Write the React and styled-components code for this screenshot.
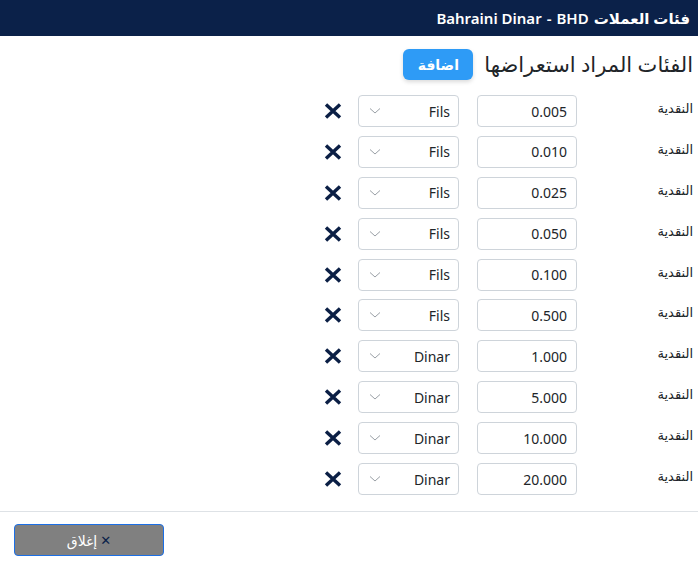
import React, { useState } from "react";
import styled, { createGlobalStyle } from "styled-components";

const GlobalStyle = createGlobalStyle`
  html, body {
    margin: 0;
    padding: 0;
    background: #fff;
    font-family: "Noto Sans", "DejaVu Sans", sans-serif;
    color: #212529;
  }
`;

let Page = styled.div`
  direction: rtl;
  width: 698px;
  height: 563px;
  display: flex;
  flex-direction: column;
`;

let Header = styled.div`
  height: 36px;
  background: #0b2149;
  color: #fff;
  display: flex;
  align-items: center;
  gap: 5px;
  padding: 0 8px;
  font-size: 15px;
  font-weight: 600;
`;

let Body = styled.div`
  padding: 13px 5px 0 0;
  flex: 1;
`;

let TitleRow = styled.div`
  display: flex;
  align-items: center;
  gap: 11px;
  height: 31px;
`;

let Title = styled.div`
  font-size: 21px;
  line-height: 31px;
`;

let AddButton = styled.button`
  width: 70px;
  height: 31px;
  border: none;
  border-radius: 6px;
  background: #2e9bf6;
  color: #fff;
  font-family: inherit;
  font-size: 14px;
  font-weight: 700;
  box-shadow: 0 2px 4px rgba(0, 0, 0, 0.15);
  cursor: pointer;
`;

let List = styled.div`
  margin-top: 15px;
  display: flex;
  flex-direction: column;
  gap: 8.9px;
`;

let Row = styled.div`
  display: flex;
  align-items: center;
  height: 32px;
`;

let Label = styled.div`
  width: 116px;
  font-size: 13px;
  margin-top: -6px;
`;

let ValueInput = styled.input`
  box-sizing: border-box;
  width: 100px;
  height: 32px;
  border: 1px solid #ced4da;
  border-radius: 4px;
  padding: 0 9px;
  font-family: inherit;
  font-size: 14px;
  color: #212529;
  text-align: right;
  direction: ltr;
  outline: none;
`;

let SelectBox = styled.div`
  box-sizing: border-box;
  width: 101px;
  height: 32px;
  margin-right: 18px;
  border: 1px solid #ced4da;
  border-radius: 4px;
  padding: 0 8px 0 10px;
  display: flex;
  align-items: center;
  justify-content: space-between;
  font-size: 14px;
  color: #212529;
`;

let RemoveButton = styled.button`
  margin-right: 16px;
  width: 18px;
  height: 18px;
  padding: 0;
  border: none;
  background: none;
  display: flex;
  align-items: center;
  justify-content: center;
  cursor: pointer;
`;

let Footer = styled.div`
  border-top: 1px solid #dee2e6;
  padding: 12px 14px 7px;
  display: flex;
  justify-content: flex-end;
`;

let CloseButton = styled.button`
  width: 150px;
  height: 32px;
  background: #808080;
  border: 1px solid #1b6fe6;
  border-radius: 4px;
  color: #fff;
  font-family: inherit;
  font-size: 14px;
  display: flex;
  align-items: center;
  justify-content: center;
  gap: 3px;
  cursor: pointer;
`;

let CloseMark = styled.span`
  color: #0b2149;
  font-size: 13px;
`;

const Chevron = () => (
  <svg width="12" height="8" viewBox="0 0 12 8">
    <path d="M1 1.5 L6 6 L11 1.5" fill="none" stroke="#9aa0a6" strokeWidth="1" />
  </svg>
);

const Cross = () => (
  <svg width="18" height="16" viewBox="0 0 18 16">
    <path
      d="M2 1.5 L16 14.5 M16 1.5 L2 14.5"
      stroke="#0b1f45"
      strokeWidth="3.4"
      strokeLinecap="butt"
    />
  </svg>
);

const initial = [
  { value: "0.005", unit: "Fils" },
  { value: "0.010", unit: "Fils" },
  { value: "0.025", unit: "Fils" },
  { value: "0.050", unit: "Fils" },
  { value: "0.100", unit: "Fils" },
  { value: "0.500", unit: "Fils" },
  { value: "1.000", unit: "Dinar" },
  { value: "5.000", unit: "Dinar" },
  { value: "10.000", unit: "Dinar" },
  { value: "20.000", unit: "Dinar" },
];

function App() {
  const [rows] = useState(initial);

  return (
    <>
      <GlobalStyle />
      <Page>
        <Header>
          <span>فئات العملات</span>
          <span>BHD</span>
          <span>-</span>
          <span>Bahraini Dinar</span>
        </Header>
        <Body>
          <TitleRow>
            <Title>الفئات المراد استعراضها</Title>
            <AddButton>اضافة</AddButton>
          </TitleRow>
          <List>
            {rows.map((row, i) => (
              <Row key={i}>
                <Label>النقدية</Label>
                <ValueInput value={row.value} readOnly />
                <SelectBox>
                  <span>{row.unit}</span>
                  <Chevron />
                </SelectBox>
                <RemoveButton>
                  <Cross />
                </RemoveButton>
              </Row>
            ))}
          </List>
        </Body>
        <Footer>
          <CloseButton>
            <CloseMark>✕</CloseMark>
            <span>إغلاق</span>
          </CloseButton>
        </Footer>
      </Page>
    </>
  );
}

export default App;
